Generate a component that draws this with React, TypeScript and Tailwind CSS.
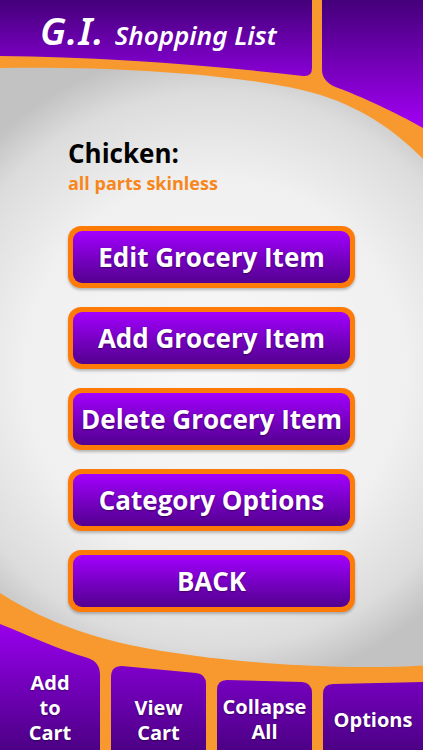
import React from "react";

const font = { fontFamily: '"Open Sans", "Noto Sans", sans-serif' };

function Background() {
  return (
    <svg
      className="absolute inset-0"
      width="423"
      height="750"
      viewBox="0 0 423 750"
      aria-hidden="true"
    >
      <defs>
        <linearGradient id="hdr" x1="0" y1="0" x2="0" y2="80" gradientUnits="userSpaceOnUse">
          <stop offset="0" stopColor="#44007a" />
          <stop offset="1" stopColor="#8c00da" />
        </linearGradient>
        <linearGradient id="hdr2" x1="0" y1="0" x2="0" y2="130" gradientUnits="userSpaceOnUse">
          <stop offset="0" stopColor="#44007a" />
          <stop offset="1" stopColor="#a400f6" />
        </linearGradient>
        <linearGradient id="tab" x1="0" y1="620" x2="0" y2="750" gradientUnits="userSpaceOnUse">
          <stop offset="0" stopColor="#9a00f0" />
          <stop offset="1" stopColor="#4c0085" />
        </linearGradient>
        <radialGradient id="gray" cx="215" cy="370" r="320" gradientUnits="userSpaceOnUse">
          <stop offset="0" stopColor="#f8f8f8" />
          <stop offset="0.6" stopColor="#f0f0f0" />
          <stop offset="0.87" stopColor="#dcdcdc" />
          <stop offset="1" stopColor="#c2c2c2" />
        </radialGradient>
      </defs>
      <rect width="423" height="750" fill="#f8992f" />
      <path d="M0 0 H312 V68 Q312 77 303 76 C 200 64 100 57 0 56 Z" fill="url(#hdr)" />
      <path d="M322 0 H423 V128 C 395 112 360 96 338 88 Q 322 82 322 70 Z" fill="url(#hdr2)" />
      <path
        d="M0 68 C 110 66 240 74 310 92 C 370 108 410 142 440 178 L 440 664 C 360 672 220 664 130 645 C 70 632 30 612 0 593 Z"
        fill="url(#gray)"
      />
      <path d="M0 624 C 30 636 60 650 88 658 Q 100 662 100 675 V750 H0 Z" fill="url(#tab)" />
      <path d="M111 677 Q111 666 122 666 L 196 673 Q 206 674 206 684 V750 H111 Z" fill="url(#tab)" />
      <path d="M217 690 Q217 680 227 680 L 302 682 Q 312 683 312 693 V750 H217 Z" fill="url(#tab)" />
      <path d="M323 694 Q323 684 333 684 L 423 682 V750 H323 Z" fill="url(#tab)" />
    </svg>
  );
}

function MenuButton({ label }: { label: string }) {
  return (
    <div className="rounded-[13px] bg-[#ff7b08] p-[5px] shadow-[0_2px_3px_rgba(0,0,0,0.25)]">
      <div className="flex h-[52px] items-center justify-center rounded-[9px] bg-linear-to-b from-[#a300ff] to-[#530090] text-[26px] font-bold text-white [text-shadow:0_1px_2px_rgba(0,0,0,0.45)]">
        {label}
      </div>
    </div>
  );
}

function Tab({ lines, pt, w }: { lines: string[]; pt: string; w: string }) {
  return (
    <div className={`flex flex-col items-center ${w} ${pt}`}>
      {lines.map((l) => (
        <span
          key={l}
          className="text-[20px] font-bold leading-[25px] text-white [text-shadow:0_1px_2px_rgba(0,0,0,0.4)]"
        >
          {l}
        </span>
      ))}
    </div>
  );
}

export default function App() {
  return (
    <div className="relative h-[750px] w-[423px] overflow-hidden" style={font}>
      <Background />
      <div className="relative flex h-full flex-col">
        <header className="flex h-[57px] items-baseline pl-[40px] pt-[5px] text-white">
          <span
            className="text-[38px] font-semibold italic leading-[50px] tracking-[1px]"
            style={{ fontFamily: '"Noto Sans", sans-serif' }}
          >
            G.I.
          </span>
          <span
            className="ml-[10px] text-[26px] font-semibold italic leading-[50px]"
            style={{ fontFamily: '"Noto Sans", sans-serif' }}
          >
            Shopping List
          </span>
        </header>
        <main className="flex flex-1 flex-col pl-[68px] pr-[68px] pt-[81px]">
          <div className="text-[26px] font-bold leading-[30px] text-black">Chicken:</div>
          <div className="mt-[4px] text-[18px] font-bold leading-[22px] text-[#f7861c]">
            all parts skinless
          </div>
          <div className="mt-[32px] flex flex-col gap-[19px]">
            <MenuButton label="Edit Grocery Item" />
            <MenuButton label="Add Grocery Item" />
            <MenuButton label="Delete Grocery Item" />
            <MenuButton label="Category Options" />
            <MenuButton label="BACK" />
          </div>
        </main>
        <footer className="flex h-[90px] gap-[11px]">
          <Tab lines={["Add", "to", "Cart"]} w="w-[100px]" pt="pt-[10px]" />
          <Tab lines={["View", "Cart"]} w="w-[95px]" pt="pt-[35px]" />
          <Tab lines={["Collapse", "All"]} w="w-[95px]" pt="pt-[34px]" />
          <Tab lines={["Options"]} w="w-[100px]" pt="pt-[47px]" />
        </footer>
      </div>
    </div>
  );
}
